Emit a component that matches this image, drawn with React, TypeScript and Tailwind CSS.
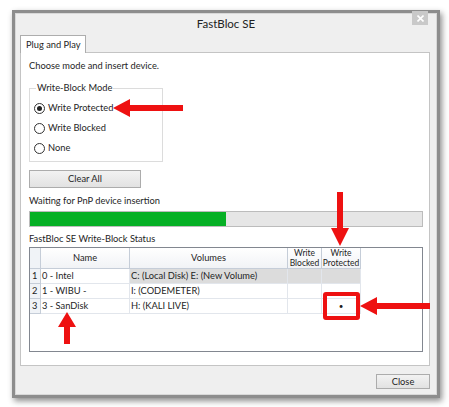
const font = { fontFamily: 'Lato, "Noto Sans", sans-serif' };

function Radio({ checked, label }: { checked?: boolean; label: string }) {
  return (
    <div className="flex items-center gap-[3px] h-[20px]">
      <span className="w-[11px] h-[11px] rounded-full border border-[#333] bg-white flex items-center justify-center">
        {checked && <span className="w-[5px] h-[5px] rounded-full bg-[#222]" />}
      </span>
      <span>{label}</span>
    </div>
  );
}

const rows = [
  { n: "1", name: "0 - Intel", vol: "C: (Local Disk) E: (New Volume)", sel: true, prot: "" },
  { n: "2", name: "1 - WIBU -", vol: "I: (CODEMETER)", sel: false, prot: "" },
  { n: "3", name: "3 - SanDisk", vol: "H: (KALI LIVE)", sel: false, prot: "•" },
];

function ArrowLeft({ x, y, w }: { x: number; y: number; w: number }) {
  return (
    <svg className="absolute" style={{ left: x, top: y - 9 }} width={w} height={18}>
      <polygon points={`0,9 17,0 17,6 ${w},6 ${w},12 17,12 17,18`} fill="#ee1111" />
    </svg>
  );
}

export default function App() {
  return (
    <div className="relative w-[449px] h-[407px] bg-white overflow-hidden text-[9.3px] text-[#1e1e1e]" style={font}>
      <div className="absolute left-[12px] top-[10px] w-[428px] h-[388px] bg-[#8d8d8d] p-[3px] shadow-[2px_3px_6px_rgba(0,0,0,0.45)]">
        <div className="w-full h-full bg-[#efefef] border border-[#d8d8d8] flex flex-col">
          {/* title bar */}
          <div className="relative h-[20px] flex items-center justify-center text-[11.5px] text-[#222]">
            FastBloc SE
            <div className="absolute right-[8px] top-[-3px] w-[16px] h-[14px] bg-[#c9c9c9] flex items-center justify-center">
              <svg width="7" height="7" viewBox="0 0 7 7">
                <path d="M0.5 0.5L6.5 6.5M6.5 0.5L0.5 6.5" stroke="#fff" strokeWidth="1.6" />
              </svg>
            </div>
          </div>
          <div className="px-[4px] pt-[1px]">
            {/* tab */}
            <div className="flex">
              <div className="h-[18px] w-[66px] pl-[5px] whitespace-nowrap bg-white border border-b-0 border-[#adadad] flex items-center relative z-10 -mb-[1px]">
                Plug and Play
              </div>
            </div>
            {/* panel */}
            <div className="w-[410px] h-[314px] bg-white border border-[#c4c4c4] pl-[8px] pr-[6px] pt-[6px]">
              <div className="leading-[14px]">Choose mode and insert device.</div>
              {/* group box */}
              <div className="relative mt-[15px] w-[134px] h-[74px] border border-[#dcdcdc] pl-[4px] pt-[9px]">
                <span className="absolute left-[6px] -top-[8px] bg-white px-[1px] leading-[14px]">Write-Block Mode</span>
                <Radio checked label="Write Protected" />
                <Radio label="Write Blocked" />
                <Radio label="None" />
              </div>
              <button className="mt-[8px] w-[112px] h-[18px] border border-[#acacac] bg-[linear-gradient(#f2f2f2,#e2e2e2)] flex items-center justify-center">
                Clear All
              </button>
              <div className="mt-[6px] leading-[14px]">Waiting for PnP device insertion</div>
              <div className="mt-[3px] w-[394px] h-[16px] border border-[#bcbcbc] bg-[#e6e6e6]">
                <div className="w-[196px] h-full bg-[#06b025]" />
              </div>
              <div className="mt-[5px] leading-[14px]">FastBloc SE Write-Block Status</div>
              {/* table */}
              <div className="mt-[1px] w-[394px] h-[105px] border border-[#828790] bg-white">
                <div className="grid grid-cols-[11px_89px_158px_34px_39px]">
                  <div className="h-[21px] border-r border-b border-[#c5cdd8] bg-[#f0f3f7]" />
                  <div className="h-[21px] border-r border-b border-[#c5cdd8] bg-[linear-gradient(#ffffff,#f1f3f6)] flex items-center justify-center">Name</div>
                  <div className="h-[21px] border-r border-b border-[#c5cdd8] bg-[linear-gradient(#ffffff,#f1f3f6)] flex items-center justify-center">Volumes</div>
                  <div className="h-[21px] border-r border-b border-[#c5cdd8] bg-[linear-gradient(#ffffff,#f1f3f6)] flex flex-col items-center justify-center leading-[10px] text-[8.5px]">
                    <span>Write</span>
                    <span>Blocked</span>
                  </div>
                  <div className="h-[21px] border-r border-b border-[#c5cdd8] bg-[linear-gradient(#ffffff,#f1f3f6)] flex flex-col items-center justify-center leading-[10px] text-[8.5px]">
                    <span>Write</span>
                    <span>Protected</span>
                  </div>
                  {rows.map((r) => (
                    <>
                      <div key={r.n + "a"} className="h-[15px] border-r border-b border-[#c5cdd8] bg-[#f0f3f7] flex items-center pl-[2px]">{r.n}</div>
                      <div key={r.n + "b"} className="h-[15px] border-r border-b border-[#e2e6ec] flex items-center pl-[1px]">{r.name}</div>
                      <div key={r.n + "c"} className={`h-[15px] border-r border-b border-[#e2e6ec] flex items-center pl-[1px] ${r.sel ? "bg-[#dcdcdc]" : ""}`}>{r.vol}</div>
                      <div key={r.n + "d"} className={`h-[15px] border-r border-b border-[#e2e6ec] ${r.sel ? "bg-[#dcdcdc]" : ""}`} />
                      <div key={r.n + "e"} className={`h-[15px] border-r border-b border-[#e2e6ec] flex items-center justify-center text-[8px] ${r.sel ? "bg-[#dcdcdc]" : ""}`}>{r.prot}</div>
                    </>
                  ))}
                </div>
              </div>
            </div>
            <div className="flex justify-end pr-[2px] mt-[8px]">
              <button className="w-[54px] h-[15px] border border-[#acacac] bg-[linear-gradient(#f2f2f2,#e2e2e2)] flex items-center justify-center">
                Close
              </button>
            </div>
          </div>
        </div>
      </div>

      {/* annotations */}
      <ArrowLeft x={113} y={108} w={70} />
      <ArrowLeft x={360} y={306} w={70} />
      <svg className="absolute" style={{ left: 331, top: 192 }} width={18} height={54}>
        <polygon points="9,54 0,36 6,36 6,0 12,0 12,36 18,36" fill="#ee1111" />
      </svg>
      <svg className="absolute" style={{ left: 58, top: 312 }} width={18} height={32}>
        <polygon points="9,0 0,15 6,15 6,32 12,32 12,15 18,15" fill="#ee1111" />
      </svg>
      <div className="absolute left-[323px] top-[292px] w-[37px] h-[28px] border-[4px] border-[#ee1111] rounded-[3px]" />
    </div>
  );
}
